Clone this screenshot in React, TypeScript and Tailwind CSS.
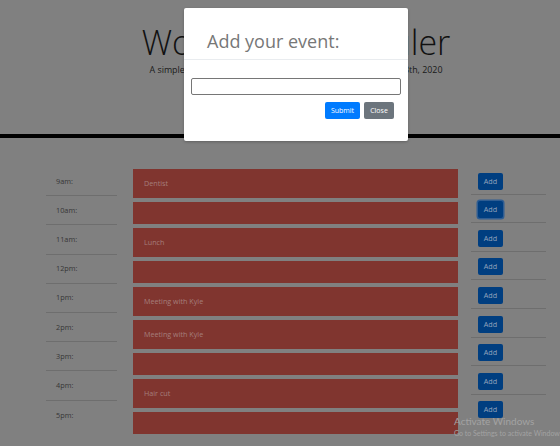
const hours = [
  { label: "9am:", text: "Dentist" },
  { label: "10am:", text: "" },
  { label: "11am:", text: "Lunch" },
  { label: "12pm:", text: "" },
  { label: "1pm:", text: "Meeting with Kyle" },
  { label: "2pm:", text: "Meeting with Kyle" },
  { label: "3pm:", text: "" },
  { label: "4pm:", text: "Hair cut" },
  { label: "5pm:", text: "" },
];

const App = () => {
  return (
    <div className="relative w-[560px] h-[446px] overflow-hidden bg-[#808080] font-['Open_Sans',sans-serif]">
      <div className="relative w-[592px]">
        {/* Header */}
        <header className="h-[138px] border-b-4 border-black text-center pt-[25.3px]">
          <h1 className="text-[34px] leading-none font-light text-[#111]">Work Day Scheduler</h1>
          <p className="mt-[6.8px] text-[8.9px] leading-none text-[#1a1a1a]">
            A simple calendar app for scheduling your work day: August 13th, 2020
          </p>
        </header>

        {/* Time blocks */}
        <div className="mx-auto w-[500px] flex items-start">
          <div className="w-[71px] pt-[29px]">
            {hours.map((h, i) => (
              <div
                key={h.label}
                className={
                  "h-[29.2px] flex items-center pl-[10px] text-[7.3px] text-[#363636] " +
                  (i < hours.length - 1 ? "border-b border-[#6e6e6e]" : "")
                }
              >
                {h.label}
              </div>
            ))}
          </div>

          <div className="ml-[16px] w-[325px] pt-[31px] flex flex-col gap-[4px]">
            {hours.map((h) => (
              <div
                key={h.label}
                className={
                  "bg-[#80352f] flex items-center pl-[11px] text-[7.2px] text-[#a57e7b] " +
                  (h.text ? "h-[29px]" : "h-[22px]")
                }
              >
                {h.text}
              </div>
            ))}
          </div>

          <div className="ml-[13px] w-[75px] pt-[28px]">
            {hours.map((h, i) => (
              <div
                key={h.label}
                className={
                  "h-[28.6px] flex items-start pl-[7px] pt-[6.7px] " +
                  (i < hours.length - 1 ? "border-b border-[#6e6e6e]" : "")
                }
              >
                <button
                  className={
                    "block w-[25px] h-[17px] rounded-[2px] bg-[#003e80] text-[7.2px] leading-none text-[#95a5bd] " +
                    (i === 1 ? "shadow-[0_0_0_1.5px_#2f5d92]" : "")
                  }
                >
                  Add
                </button>
              </div>
            ))}
          </div>
        </div>

        {/* Modal */}
        <div className="absolute inset-x-0 top-[8px] flex justify-center">
          <div className="w-[224px] bg-white rounded-[2px] shadow-[0_1px_3px_rgba(0,0,0,0.25)]">
            <div className="h-[52px] border-b border-[#e9ecef] pt-[24px] pl-[23px]">
              <h2 className="text-[18px] leading-none text-[#777]">Add your event:</h2>
            </div>
            <div className="px-[7px] pt-[18px] pb-[22px]">
              <input className="block w-full h-[17px] border border-[#767676] rounded-[2px] outline-none" />
              <div className="mt-[7px] pr-[7px] flex justify-end gap-[4px]">
                <button className="w-[35px] h-[17px] rounded-[2px] bg-[#007bff] text-[7px] leading-none text-white">
                  Submit
                </button>
                <button className="w-[30px] h-[17px] rounded-[2px] bg-[#6c757d] text-[7px] leading-none text-white">
                  Close
                </button>
              </div>
            </div>
          </div>
        </div>
      </div>

      {/* Windows watermark */}
      <div className="absolute left-[454px] top-[416px] whitespace-nowrap font-['Lato',sans-serif] text-[#a3a3a3] pointer-events-none">
        <div className="text-[10px] leading-none">Activate Windows</div>
        <div className="mt-[4px] text-[7px] leading-none">Go to Settings to activate Windows.</div>
      </div>
    </div>
  );
};

export default App;
